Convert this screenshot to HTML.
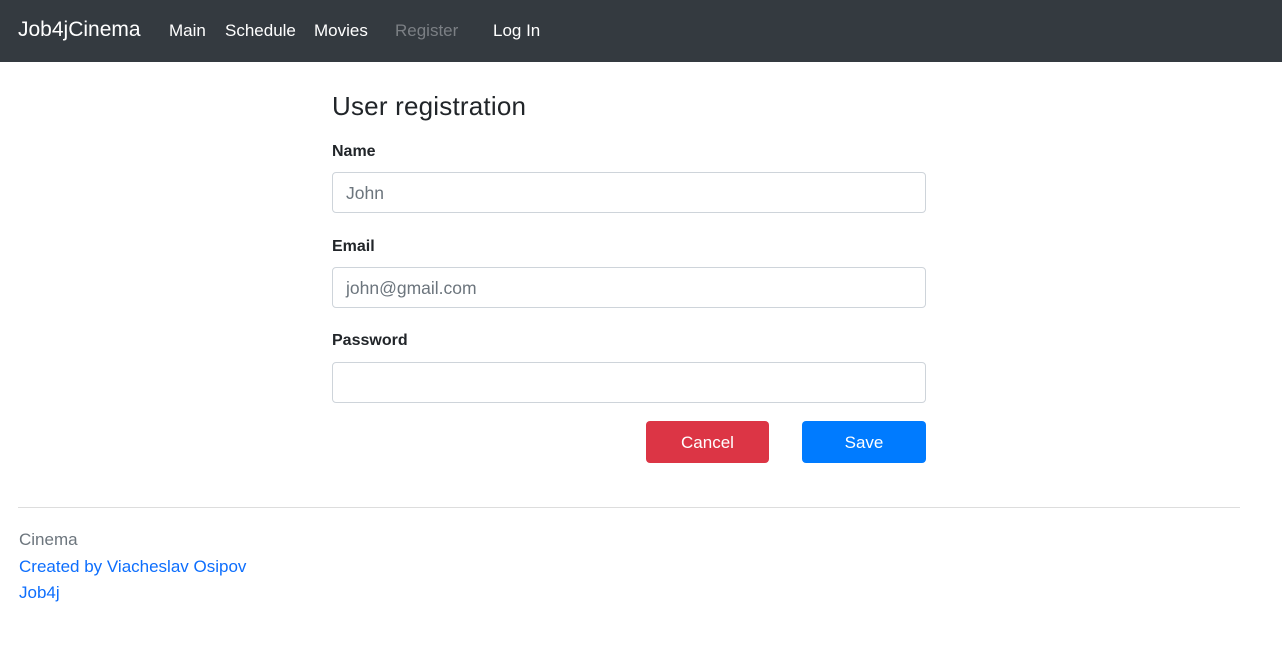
<!DOCTYPE html>
<html><head><meta charset="utf-8"><style>
body{margin:0;font-family:"Liberation Sans",sans-serif;background:#fff;color:#212529;width:1282px;height:665px;overflow:hidden;position:relative}
nav{height:62px;background:#343a40;position:relative}
nav span{position:absolute;top:21px;font-size:17px;color:#fff}
.brand{font-size:21px!important;top:18px!important;left:18px}
h4{position:absolute;left:332px;top:91px;margin:0;font-size:26px;font-weight:normal;letter-spacing:0.2px}
label{position:absolute;left:332px;font-weight:bold;font-size:16px}
.in{position:absolute;left:332px;border:1px solid #ced4da;border-radius:4px;font-size:17.5px;color:#6c757d;line-height:41px;padding-left:13px;box-sizing:border-box;width:594px;height:41px}
.btn{position:absolute;top:421px;height:42px;border-radius:4px;color:#fff;font-size:17px;text-align:center;line-height:44px}
hr{position:absolute;left:18px;top:507px;width:1222px;margin:0;border:0;border-top:1px solid #ddd}
.f{position:absolute;left:19px;font-size:17px;color:#0d6efd}
</style></head><body>
<nav><span class="brand">Job4jCinema</span><span style="left:169px">Main</span><span style="left:225px">Schedule</span><span style="left:314px">Movies</span><span style="left:395px;color:#7b7f84">Register</span><span style="left:493px">Log In</span></nav>
<h4>User registration</h4>
<label style="top:143px">Name</label><div class="in" style="top:172px">John</div>
<label style="top:238px">Email</label><div class="in" style="top:267px">john@gmail.com</div>
<label style="top:332px">Password</label><div class="in" style="top:362px"></div>
<div class="btn" style="left:646px;width:123px;background:#dc3545">Cancel</div>
<div class="btn" style="left:802px;width:124px;background:#007bff">Save</div>
<hr>
<div class="f" style="top:530px;color:#6c757d">Cinema</div>
<div class="f" style="top:557px">Created by Viacheslav Osipov</div>
<div class="f" style="top:583px">Job4j</div>
</body></html>
